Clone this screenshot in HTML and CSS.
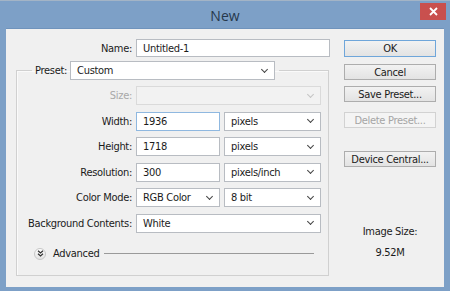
FILE: index.html
```html
<!DOCTYPE html>
<html lang="en">
<head>
  <meta charset="UTF-8">
  <title>New</title>
  <link rel="stylesheet" href="styles.css">
</head>
<body>
  <div class="window">
    <div class="titlebar">
      <span class="titlebar__title">New</span>
      <span class="titlebar__close">
        <svg width="9" height="9" viewBox="0 0 9 9"><path d="M1 1 L8 8 M8 1 L1 8" stroke="#fff" stroke-width="1.8"/></svg>
      </span>
    </div>

    <div class="client">
      <div class="form">
        <div class="row">
          <label class="row__label">Name:</label>
          <div class="field field--name">Untitled-1</div>
        </div>

        <fieldset class="group">
          <legend class="group__legend">
            <span class="group__label">Preset:</span>
            <div class="field field--select field--preset">Custom<span class="chev"></span></div>
          </legend>

          <div class="row row--inner">
            <label class="row__label row__label--disabled">Size:</label>
            <div class="field field--select field--disabled field--wide"><span class="chev chev--disabled"></span></div>
          </div>
          <div class="row row--inner">
            <label class="row__label">Width:</label>
            <div class="field field--num field--focus">1936</div>
            <div class="field field--select field--unit">pixels<span class="chev"></span></div>
          </div>
          <div class="row row--inner">
            <label class="row__label">Height:</label>
            <div class="field field--num">1718</div>
            <div class="field field--select field--unit">pixels<span class="chev"></span></div>
          </div>
          <div class="row row--inner">
            <label class="row__label">Resolution:</label>
            <div class="field field--num">300</div>
            <div class="field field--select field--unit">pixels/inch<span class="chev"></span></div>
          </div>
          <div class="row row--inner">
            <label class="row__label">Color Mode:</label>
            <div class="field field--select field--num">RGB Color<span class="chev"></span></div>
            <div class="field field--select field--unit">8 bit<span class="chev"></span></div>
          </div>
          <div class="row row--inner">
            <label class="row__label">Background Contents:</label>
            <div class="field field--select field--wide">White<span class="chev"></span></div>
          </div>

          <div class="advanced">
            <span class="advanced__toggle">
              <svg width="7" height="7" viewBox="0 0 7 7"><path d="M1 0.8 L3.5 3 L6 0.8 M1 3.8 L3.5 6 L6 3.8" fill="none" stroke="#333" stroke-width="1.2"/></svg>
            </span>
            <span class="advanced__label">Advanced</span>
            <span class="advanced__line"></span>
          </div>
        </fieldset>
      </div>

      <div class="side">
        <div class="btn btn--default">OK</div>
        <div class="btn btn--cancel">Cancel</div>
        <div class="btn btn--save">Save Preset...</div>
        <div class="btn btn--delete btn--disabled">Delete Preset...</div>
        <div class="btn btn--device">Device Central...</div>
        <div class="size">
          <p class="size__label">Image Size:</p>
          <p class="size__value">9.52M</p>
        </div>
      </div>
    </div>
  </div>
</body>
</html>
```

FILE: styles.css
```css
/* Reset */
*, *::after, *::before {
  margin: 0;
  padding: 0;
  box-sizing: border-box;
}

body {
  width: 450px;
  height: 291px;
  background-color: #7da0c7;
  font-family: "DejaVu Sans Condensed", "DejaVu Sans", sans-serif;
  font-size: 11px;
  letter-spacing: -0.3px;
  color: #1b1b1b;
  overflow: hidden;
}

.window {
  display: flex;
  flex-direction: column;
  height: 100%;
  border-top: 1px solid #a3b4c6;
}

/* Title bar */
.titlebar {
  height: 27px;
  display: flex;
  justify-content: center;
  align-items: center;
  position: relative;
}

.titlebar__title {
  font-family: "Open Sans", sans-serif;
  font-size: 14px;
  letter-spacing: 0;
  color: #26384c;
  margin-top: 2px;
}

.titlebar__close {
  position: absolute;
  top: 2px;
  right: 4px;
  width: 26px;
  height: 17px;
  background-color: #c9504e;
  display: flex;
  justify-content: center;
  align-items: center;
}

/* Client area */
.client {
  flex: 1;
  margin: 0 6px 4px;
  background-color: #f0f0f0;
  border-top: 1px solid #6f93bc;
  display: flex;
  padding: 10px 8px 0 10px;
  gap: 14px;
}

.form {
  width: 314px;
}

.row {
  display: flex;
  align-items: center;
  gap: 4px;
  height: 18px;
}

.row--inner {
  height: 19px;
  margin-top: 6.5px;
}

.row--inner:first-of-type {
  margin-top: 6px;
}

.row__label {
  width: 116px;
  text-align: right;
}

.row--inner .row__label {
  width: 115px;
}

.row__label--disabled {
  color: #a8a8a8;
}

/* Fields */
.field {
  height: 100%;
  background-color: #fff;
  border: 1px solid #b8bcc2;
  padding: 0 6px;
  display: flex;
  align-items: center;
  position: relative;
  white-space: nowrap;
}

.field--name {
  width: 194px;
}

.field--num {
  width: 84px;
}

.field--unit {
  width: 97px;
}

.field--wide {
  width: 185px;
}

.field--focus {
  border-color: #8fb8e0;
}

.field--disabled {
  background-color: #f2f2f2;
  border-color: #dadada;
}

.chev {
  position: absolute;
  right: 7px;
  top: 50%;
  width: 5px;
  height: 5px;
  margin-top: -4px;
  border-right: 1.5px solid #444;
  border-bottom: 1.5px solid #444;
  transform: rotate(45deg);
}

.chev--disabled {
  border-color: #c4c4c4;
}

/* Group box */
.group {
  margin-top: 4px;
  width: 313px;
  padding-bottom: 15px;
  border: 1px solid #d0d0d0;
  box-shadow: inset 1px 1px 0 #fafafa;
}

.group__legend {
  margin-left: 15px;
  padding: 0 4px 0 3px;
  display: flex;
  align-items: center;
  gap: 3px;
  height: 19px;
}

.field--preset {
  width: 205px;
}

.advanced {
  display: flex;
  align-items: center;
  margin-top: 15px;
  padding-left: 17px;
  height: 12px;
}

.advanced__toggle {
  width: 12px;
  height: 12px;
  border-radius: 50%;
  border: 1px solid #c7c7c7;
  background: linear-gradient(#fdfdfd, #e3e3e3);
  display: flex;
  justify-content: center;
  align-items: center;
}

.advanced__label {
  margin-left: 7px;
}

.advanced__line {
  margin-left: 5px;
  width: 210px;
  height: 1px;
  background-color: #9a9a9a;
}

/* Buttons */
.side {
  width: 92px;
  display: flex;
  flex-direction: column;
}

.btn {
  height: 16px;
  border: 1px solid #adadad;
  background: linear-gradient(#f2f2f2, #e3e3e3);
  display: flex;
  justify-content: center;
  align-items: center;
}

.btn--default {
  height: 17px;
  margin-top: 1px;
  border-color: #6fa6da;
}

.btn--cancel {
  margin-top: 7px;
}

.btn--save {
  margin-top: 6px;
}

.btn--delete {
  margin-top: 10px;
}

.btn--disabled {
  color: #a5a5a5;
  border-color: #d2d2d2;
  background: #f4f4f4;
}

.btn--device {
  margin-top: 23px;
}

.size {
  margin-top: 58px;
  text-align: center;
}

.size__value {
  margin-top: 8px;
}
```
